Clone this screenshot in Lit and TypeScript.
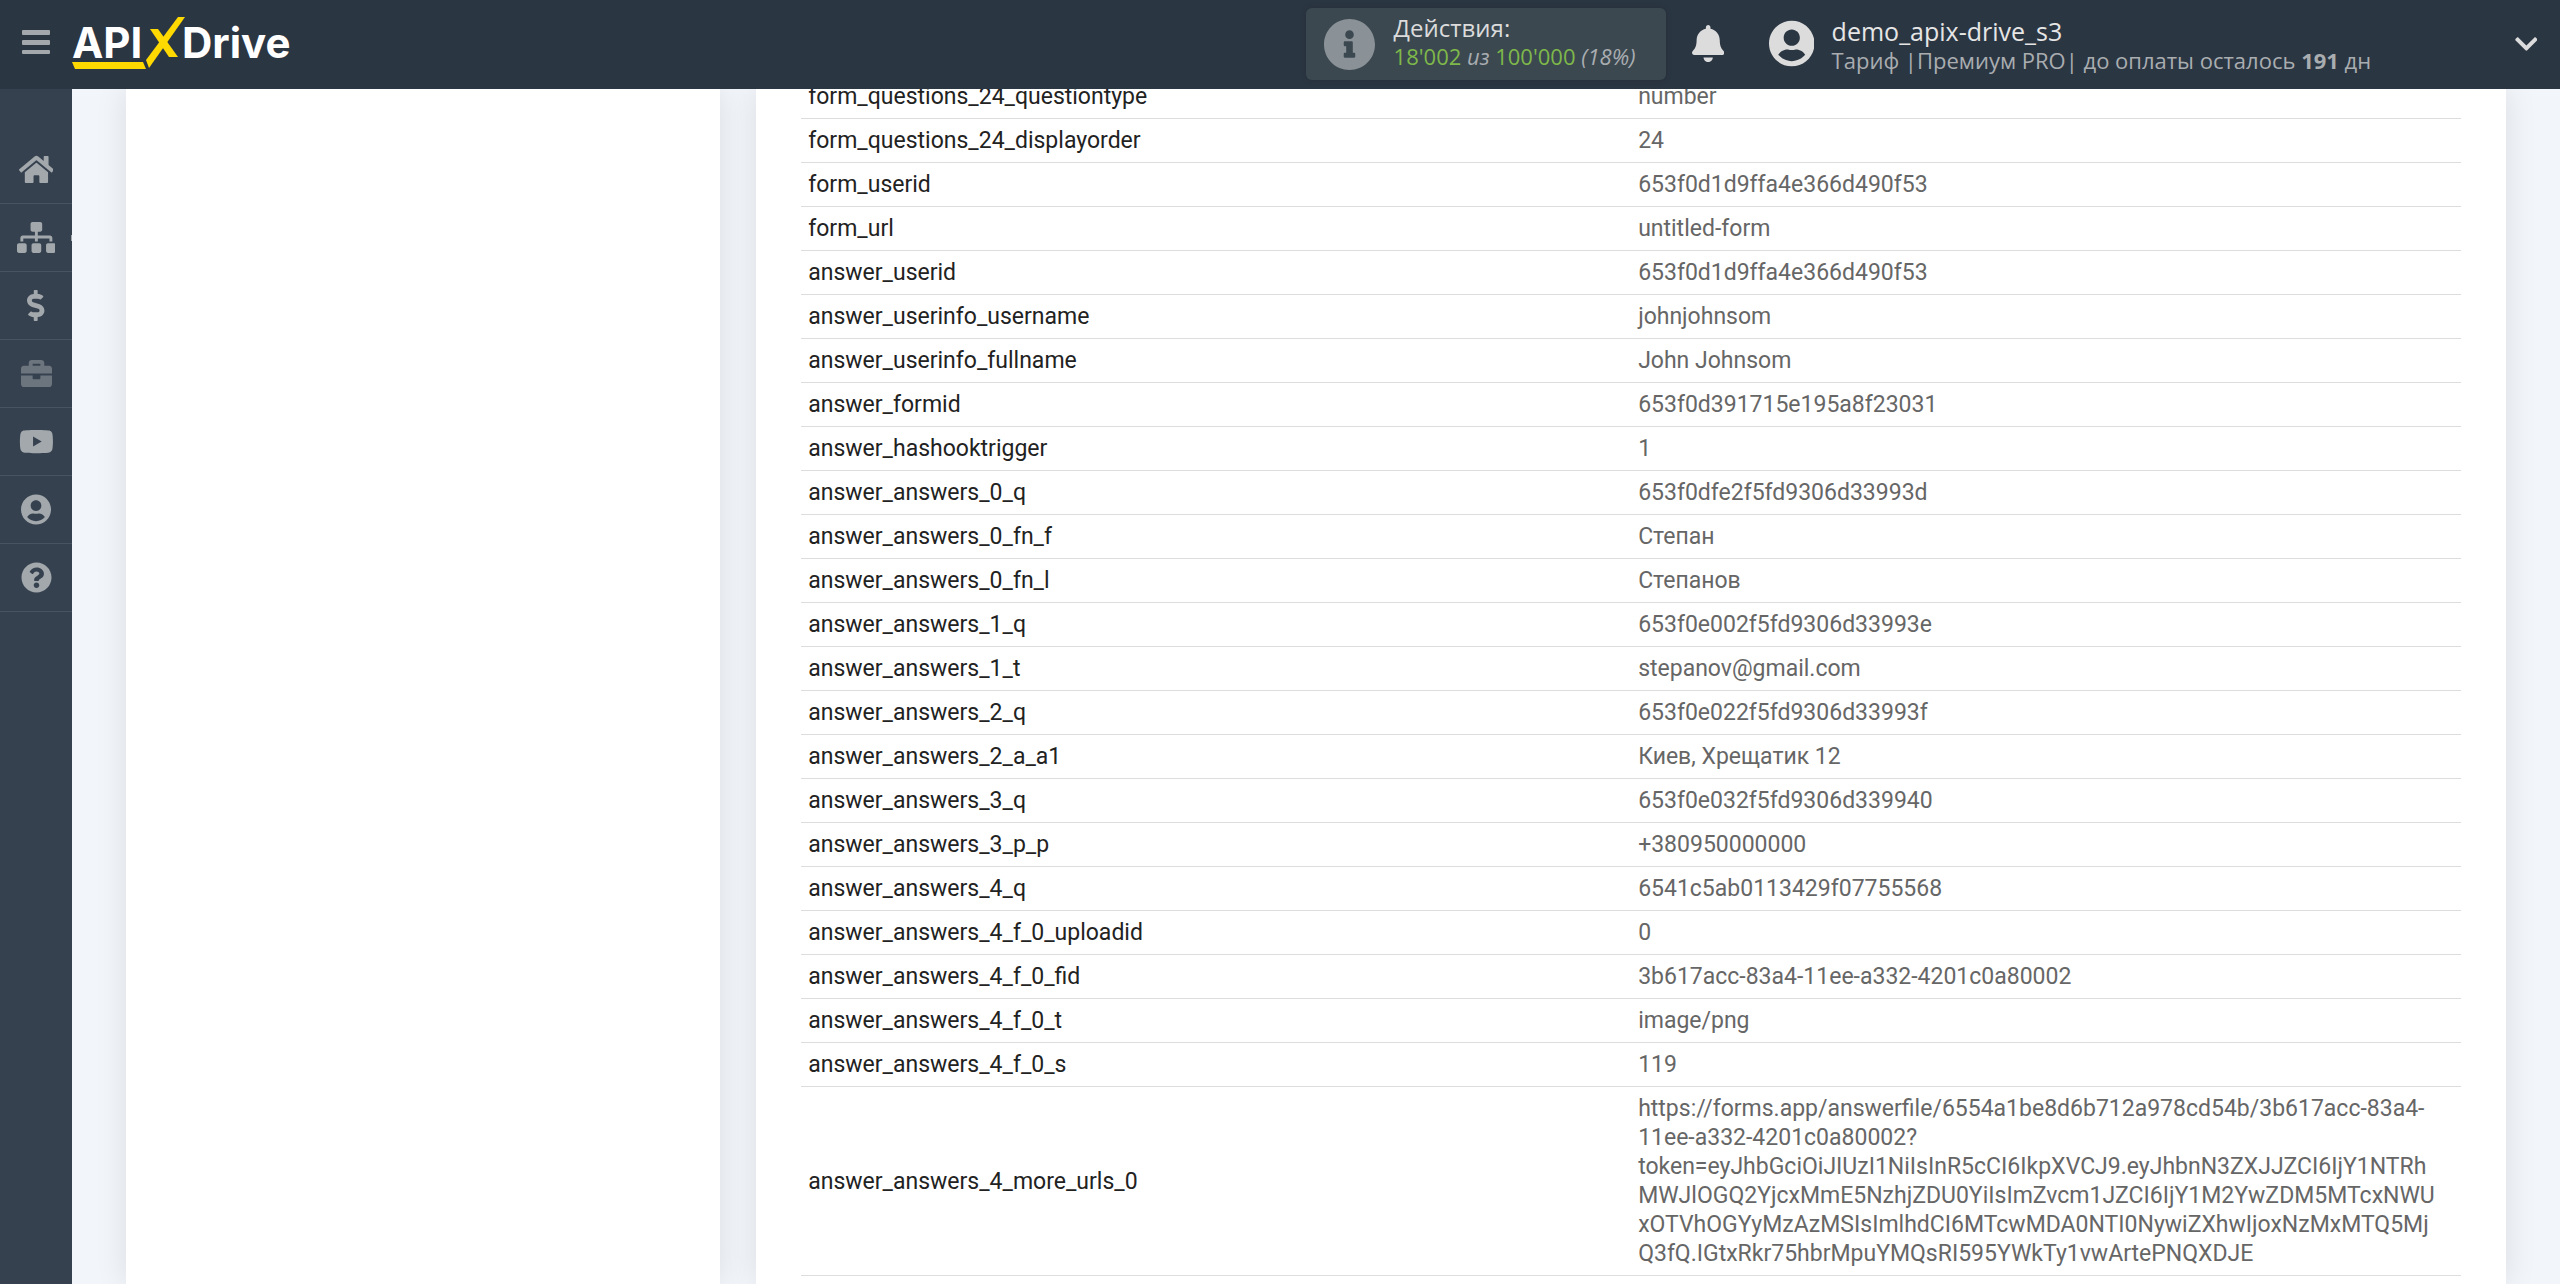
import { LitElement, html, css, svg } from "lit";
import { customElement, property } from "lit/decorators.js";

interface Glyph {
  box: string;
  d: string;
}

const GLYPHS: Record<string, Glyph> = {
  home: {
    box: "0 0 576 512",
    d: "M280.37 148.26L96 300.11V464a16 16 0 0 0 16 16l112.06-.29a16 16 0 0 0 15.92-16V368a16 16 0 0 1 16-16h64a16 16 0 0 1 16 16v95.64a16 16 0 0 0 16 16.05L464 480a16 16 0 0 0 16-16V300L295.67 148.26a12.19 12.19 0 0 0-15.3 0zM571.6 251.47L488 182.56V44.05a12 12 0 0 0-12-12h-56a12 12 0 0 0-12 12v72.61L318.47 43a48 48 0 0 0-61 0L4.34 251.47a12 12 0 0 0-1.6 16.9l25.5 31A12 12 0 0 0 45.15 301l235.22-193.74a12.19 12.19 0 0 1 15.3 0L530.9 301a12 12 0 0 0 16.9-1.6l25.5-31a12 12 0 0 0-1.7-16.93z",
  },
  sitemap: {
    box: "0 0 640 512",
    d: "M128 352H32c-17.67 0-32 14.33-32 32v96c0 17.67 14.33 32 32 32h96c17.67 0 32-14.33 32-32v-96c0-17.67-14.33-32-32-32zm-24-80h192v48h48v-48h192v48h48v-57.59c0-21.17-17.23-38.41-38.41-38.41H344v-64h40c17.67 0 32-14.33 32-32V32c0-17.67-14.33-32-32-32H256c-17.67 0-32 14.33-32 32v96c0 17.67 14.33 32 32 32h40v64H94.41C73.23 224 56 241.23 56 262.41V320h48v-48zm264 80h-96c-17.67 0-32 14.33-32 32v96c0 17.67 14.33 32 32 32h96c17.67 0 32-14.33 32-32v-96c0-17.67-14.33-32-32-32zm240 0h-96c-17.67 0-32 14.33-32 32v96c0 17.67 14.33 32 32 32h96c17.67 0 32-14.33 32-32v-96c0-17.67-14.33-32-32-32z",
  },
  dollar: {
    box: "0 0 288 512",
    d: "M209.2 233.4l-108-31.6C88.7 198.2 80 186.5 80 173.5c0-16.3 13.2-29.5 29.5-29.5h66.3c12.2 0 24.2 3.7 34.2 10.5 6.1 4.1 14.3 3.1 19.5-2l34.8-34c7.1-6.9 6.1-18.4-1.8-24.5C238 74.8 207.4 64.1 176 64V16c0-8.8-7.2-16-16-16h-32c-8.8 0-16 7.2-16 16v48h-2.5C45.8 64-5.4 118.7.5 183.6c4.2 46.1 39.4 83.6 83.8 96.6l102.5 30c12.5 3.7 21.2 15.3 21.2 28.3 0 16.3-13.2 29.5-29.5 29.5h-66.3C100 368 88 364.3 78 357.5c-6.1-4.1-14.3-3.1-19.5 2l-34.8 34c-7.1 6.9-6.1 18.4 1.8 24.5 24.5 19.2 55.1 29.9 86.5 30v48c0 8.8 7.2 16 16 16h32c8.8 0 16-7.2 16-16v-48.2c46.6-.9 90.3-28.6 105.7-72.7 21.5-61.6-14.6-124.8-72.5-141.7z",
  },
  briefcase: {
    box: "0 0 512 512",
    d: "M320 336c0 8.84-7.16 16-16 16h-96c-8.84 0-16-7.16-16-16v-48H0v144c0 25.6 22.4 48 48 48h416c25.6 0 48-22.4 48-48V288H320v48zm144-208h-80V80c0-25.6-22.4-48-48-48H176c-25.6 0-48 22.4-48 48v48H48c-25.6 0-48 22.4-48 48v80h512v-80c0-25.6-22.4-48-48-48zm-144 0H192V96h128v32z",
  },
  youtube: {
    box: "0 0 576 512",
    d: "M549.655 124.083c-6.281-23.65-24.787-42.276-48.284-48.597C458.781 64 288 64 288 64S117.22 64 74.629 75.486c-23.497 6.322-42.003 24.947-48.284 48.597-11.412 42.867-11.412 132.305-11.412 132.305s0 89.438 11.412 132.305c6.281 23.65 24.787 41.5 48.284 47.821C117.22 448 288 448 288 448s170.78 0 213.371-11.486c23.497-6.321 42.003-24.171 48.284-47.821 11.412-42.867 11.412-132.305 11.412-132.305s0-89.438-11.412-132.305zm-317.51 213.508V175.185l142.739 81.205-142.739 81.201z",
  },
  user: {
    box: "0 0 496 512",
    d: "M248 8C111 8 0 119 0 256s111 248 248 248 248-111 248-248S385 8 248 8zm0 96c48.6 0 88 39.4 88 88s-39.4 88-88 88-88-39.4-88-88 39.4-88 88-88zm0 344c-58.7 0-111.3-26.6-146.5-68.2 18.8-35.4 55.6-59.8 98.5-59.8 2.4 0 4.8.4 7.1 1.1 13 4.2 26.6 6.9 40.9 6.9 14.3 0 28-2.7 40.9-6.9 2.3-.7 4.7-1.1 7.1-1.1 42.9 0 79.7 24.4 98.5 59.8C359.3 421.4 306.7 448 248 448z",
  },
  question: {
    box: "0 0 512 512",
    d: "M504 256c0 136.997-111.043 248-248 248S8 392.997 8 256C8 119.083 119.043 8 256 8s248 111.083 248 248zM262.655 90c-54.497 0-89.255 22.957-116.549 63.758-3.536 5.286-2.353 12.415 2.715 16.258l34.699 26.31c5.205 3.947 12.621 3.008 16.665-2.122 17.864-22.658 30.113-35.797 57.303-35.797 20.429 0 45.698 13.148 45.698 32.958 0 14.976-12.363 22.667-32.534 33.976C247.128 238.528 216 254.941 216 296v4c0 6.627 5.373 12 12 12h56c6.627 0 12-5.373 12-12v-1.333c0-28.462 83.186-29.647 83.186-106.667 0-58.002-60.165-102-116.531-102zM256 338c-25.365 0-46 20.635-46 46 0 25.364 20.635 46 46 46s46-20.636 46-46c0-25.365-20.635-46-46-46z",
  },
  info: {
    box: "8 8 496 496",
    d: "M256 8C119.043 8 8 119.083 8 256c0 136.997 111.043 248 248 248s248-111.003 248-248C504 119.083 392.957 8 256 8zm0 110c23.196 0 42 18.804 42 42s-18.804 42-42 42-42-18.804-42-42 18.804-42 42-42zm56 254c0 6.627-5.373 12-12 12h-88c-6.627 0-12-5.373-12-12v-24c0-6.627 5.373-12 12-12h12v-64h-12c-6.627 0-12-5.373-12-12v-24c0-6.627 5.373-12 12-12h64c6.627 0 12 5.373 12 12v100h12c6.627 0 12 5.373 12 12v24z",
  },
  bell: {
    box: "0 0 448 512",
    d: "M224 512c35.32 0 63.97-28.65 63.97-64H160.03c0 35.35 28.65 64 63.97 64zm215.39-149.71c-19.32-20.76-55.47-51.99-55.47-154.29 0-77.7-54.48-139.9-127.94-155.16V32c0-17.67-14.32-32-31.98-32s-31.98 14.33-31.98 32v20.84C118.56 68.1 64.08 130.3 64.08 208c0 102.3-36.15 133.53-55.47 154.29-6 6.45-8.66 14.16-8.61 21.71.11 16.4 12.98 32 32.1 32h383.8c19.12 0 32-15.6 32.1-32 .05-7.55-2.61-15.27-8.61-21.71z",
  },
  chevron: {
    box: "0 0 448 512",
    d: "M207.029 381.476L12.686 187.132c-9.373-9.373-9.373-24.569 0-33.941l22.667-22.667c9.357-9.357 24.522-9.375 33.901-.04L224 284.505l154.745-154.021c9.379-9.335 24.544-9.317 33.901.04l22.667 22.667c9.373 9.373 9.373 24.569 0 33.941L240.971 381.476c-9.373 9.372-24.569 9.372-33.942 0z",
  },
  bars: {
    box: "0 0 28 25",
    d: "M1 0h26a1 1 0 0 1 1 1v3a1 1 0 0 1-1 1H1a1 1 0 0 1-1-1V1a1 1 0 0 1 1-1zM1 10h26a1 1 0 0 1 1 1v3a1 1 0 0 1-1 1H1a1 1 0 0 1-1-1v-3a1 1 0 0 1 1-1zM1 20h26a1 1 0 0 1 1 1v2a1 1 0 0 1-1 1H1a1 1 0 0 1-1-1v-2a1 1 0 0 1 1-1z",
  },
};

@customElement("app-icon")
export class AppIcon extends LitElement {
  @property() name = "home";

  static styles = css`
    :host {
      display: block;
    }
    .glyph {
      display: block;
      height: 100%;
      margin: 0 auto;
      fill: currentColor;
    }
  `;

  render() {
    const glyph = GLYPHS[this.name];
    return html`<svg class="glyph" viewBox=${glyph.box} aria-hidden="true">
      ${svg`<path d=${glyph.d}></path>`}
    </svg>`;
  }
}

@customElement("app-logo")
export class AppLogo extends LitElement {
  static styles = css`
    :host {
      display: block;
    }
    .logo {
      display: block;
      width: 224px;
      height: 56px;
    }
    .word {
      font: 700 42px Inter, "Liberation Sans", sans-serif;
      fill: #fff;
    }
    .mark {
      fill: #ffd900;
    }
  `;

  render() {
    return html`<svg class="logo" viewBox="0 0 224 56" role="img" aria-label="APIXDrive">
      <text class="word" x="0" y="43">API</text>
      <path class="mark" d="M106 2h7L77 53l-3-8z"></path>
      <path class="mark" d="M78 14h8l20 28h-9z"></path>
      <path class="mark" d="M0 47h71l3 7H3z"></path>
      <text class="word" x="110" y="43">Drive</text>
    </svg>`;
  }
}

interface MenuItem {
  icon: string;
  label: string;
  muted?: boolean;
  flyout?: boolean;
}

const MENU: MenuItem[] = [
  { icon: "home", label: "Главная" },
  { icon: "sitemap", label: "Связи", flyout: true },
  { icon: "dollar", label: "Оплата" },
  { icon: "briefcase", label: "Проекты", muted: true },
  { icon: "youtube", label: "Видео" },
  { icon: "user", label: "Профиль" },
  { icon: "question", label: "Помощь" },
];

@customElement("app-sidebar")
export class AppSidebar extends LitElement {
  static styles = css`
    :host {
      display: block;
      background: #364150;
      padding-top: 47px;
    }
    .item {
      display: flex;
      align-items: center;
      justify-content: center;
      box-sizing: border-box;
      height: 68px;
      border-bottom: 1px solid #485461;
      color: #a2a8ab;
    }
    .flyout {
      background: linear-gradient(#a2a8ab, #a2a8ab) right center / 1px 6px no-repeat;
    }
    .muted {
      color: #6c757e;
    }
    .icon {
      height: 31px;
    }
  `;

  render() {
    return html`<nav>
      ${MENU.map(
        (item) => html`<a
          class="item ${item.muted ? "muted" : ""} ${item.flyout ? "flyout" : ""}"
          href="#"
          aria-label=${item.label}
          ><app-icon class="icon" name=${item.icon}></app-icon
        ></a>`
      )}
    </nav>`;
  }
}

@customElement("app-header")
export class AppHeader extends LitElement {
  static styles = css`
    :host {
      display: flex;
      align-items: center;
      box-sizing: border-box;
      height: 89px;
      padding-bottom: 1px;
      background: #2b3643;
      color: #dcdcdc;
      font-family: "Open Sans", "Noto Sans", sans-serif;
      font-size: 22px;
      line-height: 29px;
    }
    .plain {
      display: block;
      padding: 0;
      border: 0;
      background: none;
      color: inherit;
      font: inherit;
      text-align: left;
      cursor: pointer;
    }
    .burger {
      width: 72px;
      padding-bottom: 3px;
      color: #a2a8ab;
    }
    .bars {
      height: 25px;
    }
    .brand {
      padding-bottom: 3px;
    }
    .right {
      display: flex;
      align-items: center;
      width: 49%;
      margin-left: auto;
    }
    .actions {
      display: flex;
      align-items: center;
      gap: 19px;
      box-sizing: border-box;
      width: 360px;
      height: 72px;
      padding: 0 18px;
      border-radius: 6px;
      background: #3b4850;
      box-shadow: 0 0 6px rgba(0, 0, 0, 0.15);
    }
    .info {
      width: 51px;
      height: 51px;
      color: #8a9197;
    }
    .counts {
      padding-bottom: 4px;
    }
    .title {
      font-size: 24px;
    }
    .number {
      color: #7fb84a;
    }
    .soft {
      color: #a9adb0;
    }
    .bell {
      margin-left: 26px;
      padding-bottom: 2px;
    }
    .bell-icon {
      width: 32px;
      height: 37px;
    }
    .account {
      display: flex;
      flex: 1;
      align-items: center;
      gap: 17px;
      margin-left: 45px;
      padding-right: 22px;
    }
    .avatar {
      width: 46px;
      height: 47px;
      padding-bottom: 1px;
    }
    .identity {
      padding-top: 3px;
    }
    .name {
      font-size: 25px;
      color: #e6e6e6;
    }
    .more {
      width: 24px;
      height: 26px;
      margin-left: auto;
    }
  `;

  render() {
    return html`
      <button class="plain burger" aria-label="Меню">
        <app-icon class="bars" name="bars"></app-icon>
      </button>
      <a class="brand" href="#" aria-label="APIXDrive"><app-logo></app-logo></a>
      <div class="right">
        <div class="actions">
          <app-icon class="info" name="info"></app-icon>
          <div class="counts">
            <div class="title">Действия:</div>
            <div>
              <span class="number">18'002</span> <i class="soft">из</i>
              <span class="number">100'000</span> <i class="soft">(18%)</i>
            </div>
          </div>
        </div>
        <button class="plain bell" aria-label="Уведомления">
          <app-icon class="bell-icon" name="bell"></app-icon>
        </button>
        <button class="plain account">
          <app-icon class="avatar" name="user"></app-icon>
          <div class="identity">
            <div class="name">demo_apix-drive_s3</div>
            <div class="soft">Тариф |Премиум PRO| до оплаты осталось <b>191</b> дн</div>
          </div>
          <app-icon class="more" name="chevron"></app-icon>
        </button>
      </div>
    `;
  }
}

const ROWS: [string, string][] = [
  ["form_questions_24_questiontype", "number"],
  ["form_questions_24_displayorder", "24"],
  ["form_userid", "653f0d1d9ffa4e366d490f53"],
  ["form_url", "untitled-form"],
  ["answer_userid", "653f0d1d9ffa4e366d490f53"],
  ["answer_userinfo_username", "johnjohnsom"],
  ["answer_userinfo_fullname", "John Johnsom"],
  ["answer_formid", "653f0d391715e195a8f23031"],
  ["answer_hashooktrigger", "1"],
  ["answer_answers_0_q", "653f0dfe2f5fd9306d33993d"],
  ["answer_answers_0_fn_f", "Степан"],
  ["answer_answers_0_fn_l", "Степанов"],
  ["answer_answers_1_q", "653f0e002f5fd9306d33993e"],
  ["answer_answers_1_t", "stepanov@gmail.com"],
  ["answer_answers_2_q", "653f0e022f5fd9306d33993f"],
  ["answer_answers_2_a_a1", "Киев, Хрещатик 12"],
  ["answer_answers_3_q", "653f0e032f5fd9306d339940"],
  ["answer_answers_3_p_p", "+380950000000"],
  ["answer_answers_4_q", "6541c5ab0113429f07755568"],
  ["answer_answers_4_f_0_uploadid", "0"],
  ["answer_answers_4_f_0_fid", "3b617acc-83a4-11ee-a332-4201c0a80002"],
  ["answer_answers_4_f_0_t", "image/png"],
  ["answer_answers_4_f_0_s", "119"],
  [
    "answer_answers_4_more_urls_0",
    "https://forms.app/answerfile/6554a1be8d6b712a978cd54b/3b617acc-83a4-11ee-a332-4201c0a80002?token=eyJhbGciOiJIUzI1NiIsInR5cCI6IkpXVCJ9.eyJhbnN3ZXJJZCI6IjY1NTRhMWJlOGQ2YjcxMmE5NzhjZDU0YiIsImZvcm1JZCI6IjY1M2YwZDM5MTcxNWUxOTVhOGYyMzAzMSIsImlhdCI6MTcwMDA0NTI0NywiZXhwIjoxNzMxMTQ5MjQ3fQ.IGtxRkr75hbrMpuYMQsRI595YWkTy1vwArtePNQXDJE",
  ],
];

@customElement("app-root")
export class AppRoot extends LitElement {
  static styles = css`
    :host {
      display: flex;
      flex-direction: column;
      height: 100vh;
      overflow: hidden;
      background: #f2f6fb;
    }
    .body {
      display: grid;
      grid-template-columns: 72px 1fr;
      flex: 1;
      min-height: 0;
    }
    .content {
      display: grid;
      grid-template-columns: 18fr 53fr;
      gap: 36px;
      padding: 0 54px;
      min-height: 0;
      overflow: hidden;
    }
    .card {
      background: #fff;
      box-shadow: 0 0 30px rgba(0, 0, 0, 0.1);
    }
    .data {
      padding: 0 45px;
    }
    .table {
      width: 100%;
      margin-top: -14px;
      border-collapse: separate;
      border-spacing: 0;
      table-layout: fixed;
      font: 23px/29px Roboto, "Noto Sans", sans-serif;
    }
    .cell {
      width: 50%;
      box-sizing: border-box;
      padding: 7px 22px 7px 7px;
      border-bottom: 1px solid #ddd;
      color: #666;
      font-weight: 400;
      text-align: left;
      vertical-align: middle;
      overflow-wrap: break-word;
    }
    .key {
      color: #222;
    }
  `;

  render() {
    return html`
      <app-header></app-header>
      <div class="body">
        <app-sidebar></app-sidebar>
        <main class="content">
          <section class="card"></section>
          <section class="card data">
            <table class="table">
              <tbody>
                ${ROWS.map(
                  ([key, value]) => html`<tr>
                    <th class="cell key" scope="row">${key}</th>
                    <td class="cell">${value}</td>
                  </tr>`
                )}
              </tbody>
            </table>
          </section>
        </main>
      </div>
    `;
  }
}
